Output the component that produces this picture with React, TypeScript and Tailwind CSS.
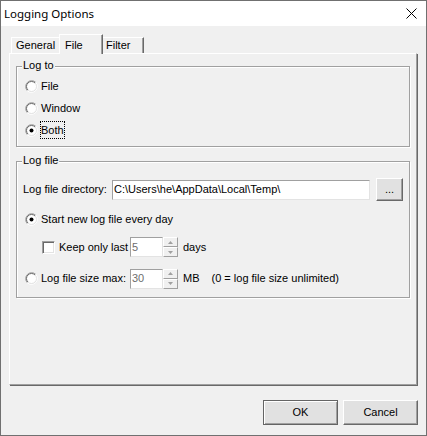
import type { ReactNode } from 'react';

function Radio({ checked }: { checked?: boolean }) {
  return (
    <svg width="13" height="13" viewBox="0 0 13 13" className="shrink-0">
      <circle cx="6.5" cy="6.5" r="5" fill="white" />
      <path d="M2.26 10.74A6 6 0 0 1 10.74 2.26" fill="none" stroke="#a0a0a0" />
      <path d="M10.74 2.26A6 6 0 0 1 2.26 10.74" fill="none" stroke="#ffffff" />
      <path d="M2.96 10.04A5 5 0 0 1 10.04 2.96" fill="none" stroke="#696969" />
      <path d="M10.04 2.96A5 5 0 0 1 2.96 10.04" fill="none" stroke="#e3e3e3" />
      {checked && <circle cx="6.5" cy="6.5" r="2" fill="#000" />}
    </svg>
  );
}

function Checkbox() {
  return (
    <div className="h-[13px] w-[13px] shrink-0 border border-t-[#a0a0a0] border-l-[#a0a0a0] border-r-white border-b-white bg-white shadow-[inset_1px_1px_0_#696969,inset_-1px_-1px_0_#e3e3e3]" />
  );
}

function Spinner() {
  return (
    <div className="flex h-[20px] w-[15px] flex-col">
      {['up', 'down'].map((dir) => (
        <div
          key={dir}
          className="flex h-[10px] items-center justify-center border border-t-white border-l-white border-r-[#a0a0a0] border-b-[#a0a0a0] bg-[#f0f0f0]"
        >
          <svg width="5" height="3" viewBox="0 0 5 3">
            {dir === 'up' ? (
              <path d="M2.5 0L5 3H0z" fill="#a0a0a0" />
            ) : (
              <path d="M0 0H5L2.5 3z" fill="#a0a0a0" />
            )}
          </svg>
        </div>
      ))}
    </div>
  );
}

function Group({ label, className, children }: { label: string; className: string; children: ReactNode }) {
  return (
    <div
      className={`relative ml-[6px] w-[394px] border border-[#a0a0a0] shadow-[inset_1px_1px_0_white,1px_1px_0_white] ${className}`}
    >
      <span className="absolute top-[-8px] left-[5px] bg-[#f0f0f0] px-px leading-[13px]">{label}</span>
      {children}
    </div>
  );
}

export default function App() {
  return (
    <div className="flex h-[436px] w-[427px] flex-col border border-[#707070] bg-[#f0f0f0] font-['Liberation_Sans',Arial,sans-serif] text-[11px] text-black">
      {/* Title bar */}
      <div className="flex h-[25px] shrink-0 items-center justify-between bg-white pr-[9px] pl-[3px]">
        <span className="font-['Noto_Sans',sans-serif] text-[11.5px]">Logging Options</span>
        <svg width="11" height="11" viewBox="0 0 11 11">
          <path d="M0.5 0.5L10.5 10.5M10.5 0.5L0.5 10.5" stroke="#000" strokeWidth="1" />
        </svg>
      </div>

      <div className="flex flex-1 flex-col pt-[8px] pl-[8px]">
        {/* Tabs */}
        <div className="relative z-10 flex h-[20px] items-end pl-[2px]">
          <div className="mb-px flex h-[16px] w-[48px] items-center border-t border-l border-white pl-[4px]">
            General
          </div>
          <div className="flex h-[20px] w-[44px] items-start border-t border-l border-r border-t-white border-l-white border-r-[#696969] bg-[#f0f0f0] pt-[2px] pl-[5px] shadow-[inset_-1px_0_0_#a0a0a0]">
            File
          </div>
          <div className="mb-px flex h-[16px] w-[41px] items-center border-t border-r border-t-white border-r-[#696969] pl-[3px] shadow-[inset_-1px_0_0_#a0a0a0]">
            Filter
          </div>
        </div>

        {/* Tab panel */}
        <div className="-mt-px h-[332px] w-[408px] border border-t-white border-l-white border-r-[#a0a0a0] border-b-[#a0a0a0] pt-[12px] shadow-[1px_1px_0_#696969]">
          <Group label="Log to" className="h-[81px] pt-[8px]">
            <div className="flex flex-col pl-[8px]">
              <label className="flex h-[22px] items-center gap-[3px]">
                <Radio />
                <span>File</span>
              </label>
              <label className="flex h-[22px] items-center gap-[3px]">
                <Radio />
                <span>Window</span>
              </label>
              <label className="flex h-[22px] items-center gap-[3px]">
                <Radio checked />
                <span className="outline-1 outline-offset-0 outline-black outline-dotted">Both</span>
              </label>
            </div>
          </Group>

          <Group label="Log file" className="mt-[14px] h-[137px] pt-[16px]">
            <div className="flex h-[23px] items-center pl-[6px]">
              <span className="w-[89px]">Log file directory:</span>
              <div className="flex h-[20px] w-[258px] items-center border border-t-[#a0a0a0] border-l-[#a0a0a0] border-r-[#e3e3e3] border-b-[#e3e3e3] bg-white pl-px">
                C:\Users\he\AppData\Local\Temp\
              </div>
              <button className="ml-[6px] flex h-[23px] w-[27px] items-end justify-center border border-t-white border-l-white border-r-[#696969] border-b-[#696969] bg-[#e1e1e1] pb-[5px] leading-none shadow-[inset_-1px_-1px_0_#a0a0a0]">
                ...
              </button>
            </div>

            <label className="mt-[7px] flex h-[22px] items-center gap-[3px] pl-[8px]">
              <Radio checked />
              <span>Start new log file every day</span>
            </label>

            <div className="mt-[7px] flex h-[20px] items-center pl-[25px]">
              <Checkbox />
              <span className="ml-[4px] w-[71px]">Keep only last</span>
              <div className="flex h-[20px] w-[33px] items-center border border-t-[#a0a0a0] border-l-[#a0a0a0] border-r-[#e3e3e3] border-b-[#e3e3e3] bg-white pl-px text-[#6d6d6d]">
                5
              </div>
              <Spinner />
              <span className="ml-[5px]">days</span>
            </div>

            <div className="mt-[11px] flex h-[21px] items-center pl-[8px]">
              <Radio />
              <span className="ml-[3px] w-[89px]">Log file size max:</span>
              <div className="flex h-[20px] w-[33px] items-center border border-t-[#a0a0a0] border-l-[#a0a0a0] border-r-[#e3e3e3] border-b-[#e3e3e3] bg-white pl-px text-[#6d6d6d]">
                30
              </div>
              <Spinner />
              <span className="ml-[5px]">MB</span>
              <span className="ml-[12px]">(0 = log file size unlimited)</span>
            </div>
          </Group>
        </div>

        {/* Buttons */}
        <div className="mt-[15px] flex justify-end gap-[5px] pr-[8px]">
          <button className="h-[25px] w-[75px] border border-[#646464] bg-[#e1e1e1] shadow-[inset_1px_1px_0_white,inset_-1px_-1px_0_#a0a0a0]">
            OK
          </button>
          <button className="h-[25px] w-[75px] border border-t-white border-l-white border-r-[#696969] border-b-[#696969] bg-[#e1e1e1] shadow-[inset_-1px_-1px_0_#a0a0a0]">
            Cancel
          </button>
        </div>
      </div>
    </div>
  );
}
